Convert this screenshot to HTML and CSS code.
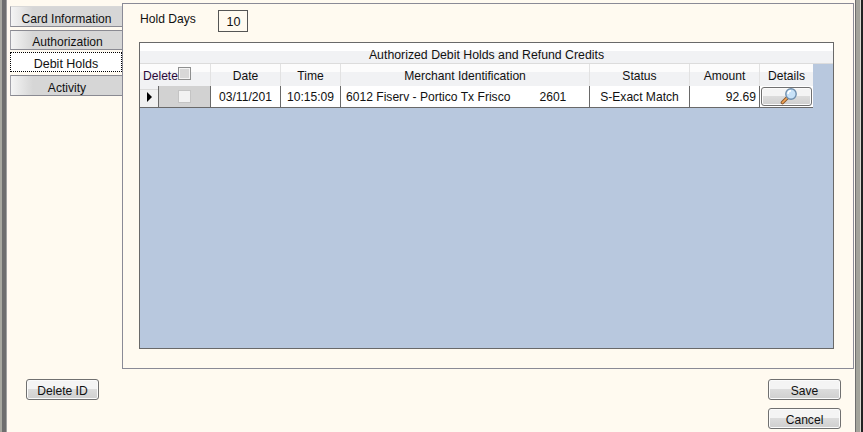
FILE: index.html
```html
<!DOCTYPE html>
<html lang="en">
<head>
<meta charset="utf-8">
<title>Debit Holds</title>
<link rel="stylesheet" href="styles.css">
</head>
<body>
<div class="window">
  <div class="edge-left"></div>
  <div class="content">
    <div class="top">
      <nav class="tabs">
        <div class="tab tab-card">Card Information</div>
        <div class="tab tab-auth">Authorization</div>
        <div class="tab tab-active">Debit Holds</div>
        <div class="tab tab-activity">Activity</div>
      </nav>
      <section class="panel">
        <div class="hold-row">
          <span class="hold-label">Hold Days</span>
          <span class="hold-box">10</span>
        </div>
        <div class="grid">
          <div class="grid-title">Authorized Debit Holds and Refund Credits</div>
          <div class="cols head">
            <div class="hcell hdelete"><span class="del-label">Delete</span><span class="check check-head"></span></div>
            <div class="hcell">Date</div>
            <div class="hcell">Time</div>
            <div class="hcell">Merchant Identification</div>
            <div class="hcell">Status</div>
            <div class="hcell">Amount</div>
            <div class="hcell">Details</div>
          </div>
          <div class="cols row">
            <div class="cell rowhead"><span class="arrow"></span></div>
            <div class="cell celldelete"><span class="check check-row"></span></div>
            <div class="cell center">03/11/201</div>
            <div class="cell center">10:15:09</div>
            <div class="cell merchant"><span>6012 Fiserv - Portico Tx Frisco</span><span class="store">2601</span></div>
            <div class="cell center">S-Exact Match</div>
            <div class="cell right">92.69</div>
            <div class="cell details">
              <span class="btn btn-details">
                <svg class="lens" width="17" height="17" viewBox="0 0 17 17" aria-hidden="true">
                  <path d="M2.5 14.5 L7 10" stroke="#8a5a30" stroke-width="3.6" stroke-linecap="round"/>
                  <path d="M2.5 14.5 L7 10" stroke="#f4a555" stroke-width="1.7" stroke-linecap="round"/>
                  <circle cx="11" cy="6" r="5.2" fill="#c8e2f8" stroke="#6f8fae" stroke-width="1.4"/>
                  <path d="M8 6 A3.2 3.2 0 0 1 11 2.8" fill="none" stroke="#ffffff" stroke-width="1.5"/>
                </svg>
              </span>
            </div>
          </div>
        </div>
      </section>
    </div>
    <div class="footer">
      <div class="footer-left"><button class="btn btn-action" type="button">Delete ID</button></div>
      <div class="footer-right">
        <button class="btn btn-action" type="button">Save</button>
        <button class="btn btn-action" type="button">Cancel</button>
      </div>
    </div>
  </div>
  <div class="edge-right"></div>
</div>
</body>
</html>
```
FILE: styles.css
```css
* { box-sizing: border-box; }
html, body { margin: 0; padding: 0; }
body {
  width: 863px;
  height: 432px;
  overflow: hidden;
  background: #fffaf0;
  font-family: "Liberation Sans", Arial, sans-serif;
  font-size: 12.1px;
  color: #111;
}
.window { display: flex; height: 432px; }
.edge-left {
  width: 8px;
  background: linear-gradient(to right, #a8a8a0 0 2px, #6e6e6e 2px 6px, #a0a0a0 6px 7px, #fffaf0 7px);
}
.edge-right {
  width: 8px;
  background: linear-gradient(to right, #6e6e6e 0 1px, #a3a39b 1px 5px, #d8d8d0 5px 6px, #222 6px 8px);
}
.content { flex: 1; display: flex; flex-direction: column; }
.top { display: flex; padding-top: 3px; height: 369px; }
.tabs {
  width: 112px;
  margin-left: 2px;
  padding-top: 3px;
  display: flex;
  flex-direction: column;
}
.tab {
  display: flex;
  align-items: center;
  justify-content: center;
  background: linear-gradient(to right, #f4f4f4, #d6d6d6 22px);
  border-left: 1px solid #a0a0a8;
  border-top: 1px solid #d8d8d8;
  border-bottom: 1px solid #8a8a92;
}
.tab-card { height: 21px; margin-bottom: 3px; padding-top: 4px; }
.tab-auth { height: 20px; margin-bottom: 2px; padding-top: 3px; padding-left: 2px; border-top: 1px solid #8a8a92; }
.tab-active {
  height: 20px;
  margin-bottom: 3px;
  padding-top: 3px;
  font-size: 12.5px;
  background: #fff;
  border: 1px dotted #000;
}
.tab-activity { height: 21px; padding-top: 5px; padding-left: 1px; border-top: 1px solid #8a8a92; }
.panel {
  width: 732px;
  height: 366px;
  background: #fffaf0;
  border: 1px solid #8a8a96;
  padding: 6px 0 0 16px;
}
.hold-row { display: flex; height: 32px; }
.hold-label { margin-left: 1px; line-height: 18px; width: 78px; }
.hold-box {
  width: 30px;
  height: 22px;
  border: 1px solid #555;
  padding-left: 1px;
  text-align: center;
  font-size: 12.6px;
  line-height: 22px;
}
.grid {
  width: 695px;
  height: 307px;
  background: #b8c8de;
  border: 1px solid #696969;
}
.grid-title {
  height: 21px;
  background: linear-gradient(to bottom, #fff 0 8px, #f1f2f4 8px);
  border-bottom: 1px solid #dcdcdc;
  text-align: center;
  font-size: 12.3px;
  line-height: 24px;
}
.cols {
  display: grid;
  width: 673px;
  grid-template-columns: 18px 52px 70px 60px 249px 100px 70px 54px;
}
.head { height: 22px; }
.hcell {
  background: linear-gradient(to bottom, #fcfcfc 0 8px, #f1f2f4 8px);
  border-left: 1px solid #e2e2e2;
  border-bottom: 1px solid #dcdcdc;
  text-align: center;
  line-height: 25px;
}
.hdelete {
  grid-column: span 2;
  position: relative;
  border-left: 0;
  text-align: left;
  padding-left: 3px;
}
.del-label { color: #2a0a3a; }
.check {
  position: absolute;
  width: 13px;
  height: 13px;
}
.check-head {
  left: 38px;
  top: 3px;
  background: #d8d8d8;
  border: 1px solid #8e8f8f;
  box-shadow: inset 0 0 0 1px #f4f4f4;
}
.check-row {
  left: 19px;
  top: 4px;
  background: #f2f2f2;
  border: 1px solid #c4c4c4;
}
.row { height: 22px; }
.cell {
  background: #fff;
  border-left: 1px solid #696969;
  border-bottom: 1px solid #696969;
  line-height: 23px;
  white-space: nowrap;
  overflow: hidden;
}
.center { text-align: center; }
.right { text-align: right; padding-right: 3px; }
.rowhead {
  border-left: 0;
  background: #f0f0f0;
  display: flex;
  align-items: center;
  padding-left: 7px;
}
.arrow {
  width: 0;
  height: 0;
  border-left: 5px solid #000;
  border-top: 5px solid transparent;
  border-bottom: 5px solid transparent;
}
.celldelete { position: relative; background: #d2d2d2; }
.merchant { padding-left: 5px; display: flex; }
.store { margin-left: 29px; }
.details { padding: 1px 1px 0; }
.btn {
  border: 1px solid #707070;
  border-radius: 3px;
  background: linear-gradient(to bottom, #f4f4f4 0 45%, #dcdcdc 50%, #cfcfcf);
  box-shadow: inset 0 0 0 1px #fbfbfb;
}
.btn-details {
  display: flex;
  width: 51px;
  height: 19px;
  align-items: center;
  justify-content: center;
}
.lens { margin-left: 3px; }
.footer {
  display: flex;
  justify-content: space-between;
  padding: 10px 14px 0 18px;
}
.footer-right { display: flex; flex-direction: column; gap: 8px; }
.btn-action {
  width: 73px;
  height: 21px;
  padding: 2px 0 0;
  font: inherit;
  color: #111;
}
```
